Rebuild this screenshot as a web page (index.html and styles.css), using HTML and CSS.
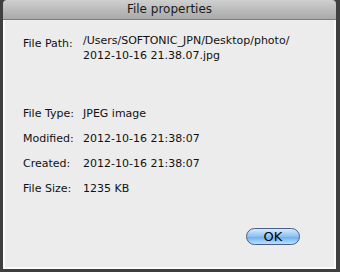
FILE: index.html
```html
<!DOCTYPE html>
<html lang="en">
<head>
  <meta charset="UTF-8">
  <title>File properties</title>
  <link rel="stylesheet" href="styles.css">
</head>
<body>

<div class="window">
  <div class="titlebar">File properties</div>
  <div class="content">
    <div class="row path">
      <span class="label">File Path:</span>
      <span class="value">/Users/SOFTONIC_JPN/Desktop/photo/<br>2012-10-16 21.38.07.jpg</span>
    </div>
    <div class="row">
      <span class="label">File Type:</span>
      <span class="value">JPEG image</span>
    </div>
    <div class="row">
      <span class="label">Modified:</span>
      <span class="value">2012-10-16 21:38:07</span>
    </div>
    <div class="row">
      <span class="label">Created:</span>
      <span class="value">2012-10-16 21:38:07</span>
    </div>
    <div class="row">
      <span class="label">File Size:</span>
      <span class="value">1235 KB</span>
    </div>
    <div class="actions">
      <button class="ok">OK</button>
    </div>
  </div>
</div>

</body>
</html>
```

FILE: styles.css
```css
body {
  margin: 0;
  background-color: #3f3f3f;
  font-family: "DejaVu Sans", sans-serif;
  font-size: 11px;
  color: #111;
}
.window {
  margin-left: 3px;
  width: 333px;
  height: 269px;
  display: flex;
  flex-direction: column;
}
.titlebar {
  height: 19px;
  line-height: 19px;
  text-align: center;
  font-size: 12px;
  color: #1a1a1a;
  background: linear-gradient(#cfcfcf, #a9a9a9);
  border-bottom: 1px solid #7d7d7d;
  border-radius: 4px 4px 0 0;
}
.content {
  flex: 1;
  background-color: #ececec;
  border-left: 2px solid #fafafa;
  border-right: 2px solid #fafafa;
  border-bottom: 2px solid #fafafa;
  padding: 13px 0 0 18px;
  display: flex;
  flex-direction: column;
}
.row {
  display: flex;
  height: 25px;
  line-height: 15px;
}
.row.path {
  height: 73px;
}
.label {
  width: 60px;
}
.path .label {
  padding-top: 3px;
}
.actions {
  display: flex;
  justify-content: flex-end;
  padding: 22px 34px 0 0;
}
.ok {
  width: 54px;
  height: 17px;
  padding: 0;
  font-family: "DejaVu Sans", sans-serif;
  font-size: 13px;
  line-height: 15px;
  color: #000;
  border: 1px solid #4a5d86;
  border-radius: 9px;
  background: linear-gradient(#d6ebff, #8dc0f2 50%, #6aaaf0 51%, #b7e3ff);
}
```
